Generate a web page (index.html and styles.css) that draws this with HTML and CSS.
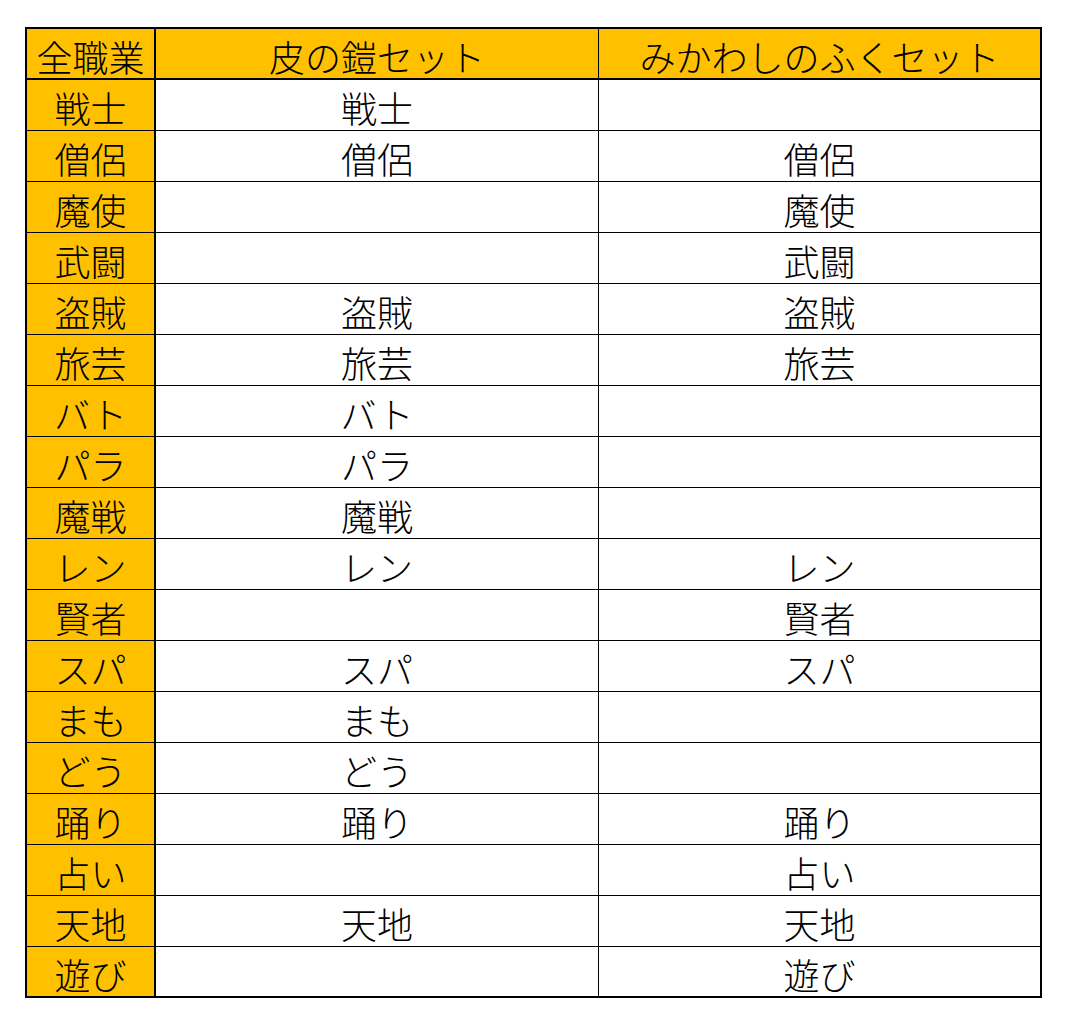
FILE: index.html
```html
<!DOCTYPE html>
<html lang="ja">
<head>
<meta charset="utf-8">
<title>セット装備表</title>
<link rel="stylesheet" href="styles.css">
</head>
<body>
<div class="sheet">
  <div class="cell job head">全職業</div><div class="cell head">皮の鎧セット</div><div class="cell head last-col">みかわしのふくセット</div>
  <div class="cell job">戦士</div><div class="cell">戦士</div><div class="cell last-col"></div>
  <div class="cell job">僧侶</div><div class="cell">僧侶</div><div class="cell last-col">僧侶</div>
  <div class="cell job">魔使</div><div class="cell"></div><div class="cell last-col">魔使</div>
  <div class="cell job">武闘</div><div class="cell"></div><div class="cell last-col">武闘</div>
  <div class="cell job">盗賊</div><div class="cell">盗賊</div><div class="cell last-col">盗賊</div>
  <div class="cell job">旅芸</div><div class="cell">旅芸</div><div class="cell last-col">旅芸</div>
  <div class="cell job">バト</div><div class="cell">バト</div><div class="cell last-col"></div>
  <div class="cell job">パラ</div><div class="cell">パラ</div><div class="cell last-col"></div>
  <div class="cell job">魔戦</div><div class="cell">魔戦</div><div class="cell last-col"></div>
  <div class="cell job">レン</div><div class="cell">レン</div><div class="cell last-col">レン</div>
  <div class="cell job">賢者</div><div class="cell"></div><div class="cell last-col">賢者</div>
  <div class="cell job">スパ</div><div class="cell">スパ</div><div class="cell last-col">スパ</div>
  <div class="cell job">まも</div><div class="cell">まも</div><div class="cell last-col"></div>
  <div class="cell job">どう</div><div class="cell">どう</div><div class="cell last-col"></div>
  <div class="cell job">踊り</div><div class="cell">踊り</div><div class="cell last-col">踊り</div>
  <div class="cell job">占い</div><div class="cell"></div><div class="cell last-col">占い</div>
  <div class="cell job">天地</div><div class="cell">天地</div><div class="cell last-col">天地</div>
  <div class="cell job last-row">遊び</div><div class="cell last-row"></div><div class="cell last-row last-col">遊び</div>
</div>
</body>
</html>
```
FILE: styles.css
```css
html, body {
  margin: 0;
  padding: 0;
  background: #ffffff;
}

body {
  font-family: "Noto Sans CJK JP", "Noto Sans", sans-serif;
  color: #000000;
}

.sheet {
  box-sizing: border-box;
  width: 1017px;
  margin: 27px 0 0 25px;
  border: 2px solid #000000;
  display: grid;
  grid-template-columns: 129px 443px 441px;
  grid-template-rows: repeat(18, 51px) 49px;
}

.cell {
  box-sizing: border-box;
  display: flex;
  align-items: center;
  justify-content: center;
  border-right: 1px solid #000000;
  border-bottom: 1px solid #000000;
  font-size: 36px;
  font-weight: 300;
  line-height: 1;
  padding-top: 4px;
  white-space: nowrap;
  background: #ffffff;
}

.job {
  background: #ffc000;
  border-right: 2px solid #000000;
}

.head {
  background: #ffc000;
  border-bottom: 2px solid #000000;
  font-size: 36px;
  padding-top: 4px;
}

.last-col {
  border-right: none;
}

.last-row {
  border-bottom: none;
}
```
